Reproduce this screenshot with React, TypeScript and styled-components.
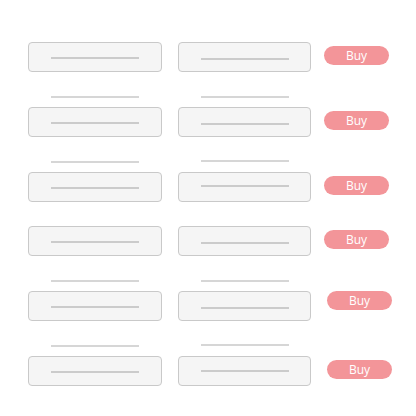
import React from 'react';
import styled, { createGlobalStyle } from 'styled-components';

const GlobalStyle = createGlobalStyle`
    html, body {
        margin: 0;
        padding: 0;
        background: #ffffff;
    }
    body {
        font-family: "Open Sans", "Liberation Sans", sans-serif;
    }
`;

const Page = styled.div`
    width: 416px;
    height: 416px;
    box-sizing: border-box;
    padding: 42px 0 0 28px;
    display: flex;
    flex-direction: column;
    gap: 24px;
`;

const Row = styled.div`
    display: grid;
    grid-template-columns: 134px 133px auto;
    column-gap: 16px;
    align-items: end;
`;

const Field = styled.div`
    display: flex;
    flex-direction: column;
    gap: 9px;
`;

const Label = styled.div<{ $lift?: number }>`
    width: 88px;
    height: 2px;
    margin-left: 23px;
    background: #d6d6d6;
    position: relative;
    top: ${(p) => -(p.$lift ?? 0)}px;
`;

const Box = styled.div<{ $lineY?: number }>`
    box-sizing: border-box;
    height: 30px;
    border: 1px solid #c9c9c9;
    border-radius: 4px;
    background: #f5f5f5;
    display: flex;
    align-items: flex-start;
    padding-top: ${(p) => p.$lineY ?? 14}px;
    padding-left: 22px;
`;

const BoxLine = styled.div`
    width: 88px;
    height: 2px;
    background: #cbcbcb;
`;

const BuyButton = styled.button<{ $dx?: number; $dy?: number }>`
    align-self: end;
    width: 65px;
    height: 19px;
    margin-left: ${(p) => -3 + (p.$dx ?? 0)}px;
    margin-bottom: ${(p) => p.$dy ?? 7}px;
    padding: 0;
    border: none;
    border-radius: 10px;
    background: #f39599;
    color: #ffffff;
    font-family: "Open Sans", "Liberation Sans", sans-serif;
    font-size: 12px;
    line-height: 19px;
    text-align: center;
`;

type RowSpec = {
    labels: boolean;
    lineY: [number, number];
    lift?: [number, number];
    dx?: number;
    dy?: number;
};

const rows: RowSpec[] = [
    { labels: false, lineY: [14, 15], dy: 7 },
    { labels: true, lineY: [14, 15], dy: 7 },
    { labels: true, lineY: [14, 12], lift: [0, 1], dy: 7 },
    { labels: false, lineY: [14, 15], dy: 7 },
    { labels: true, lineY: [14, 15], dx: 3, dy: 11 },
    { labels: true, lineY: [14, 13], lift: [0, 1], dx: 3, dy: 7 },
];

const App = () => (
    <>
        <GlobalStyle />
        <Page>
            {rows.map((row, index) => (
                <Row key={index}>
                    {[0, 1].map((col) => (
                        <Field key={col}>
                            {row.labels && <Label $lift={row.lift?.[col]} />}
                            <Box $lineY={row.lineY[col]}>
                                <BoxLine />
                            </Box>
                        </Field>
                    ))}
                    <BuyButton $dx={row.dx} $dy={row.dy}>Buy</BuyButton>
                </Row>
            ))}
        </Page>
    </>
);

export default App;
